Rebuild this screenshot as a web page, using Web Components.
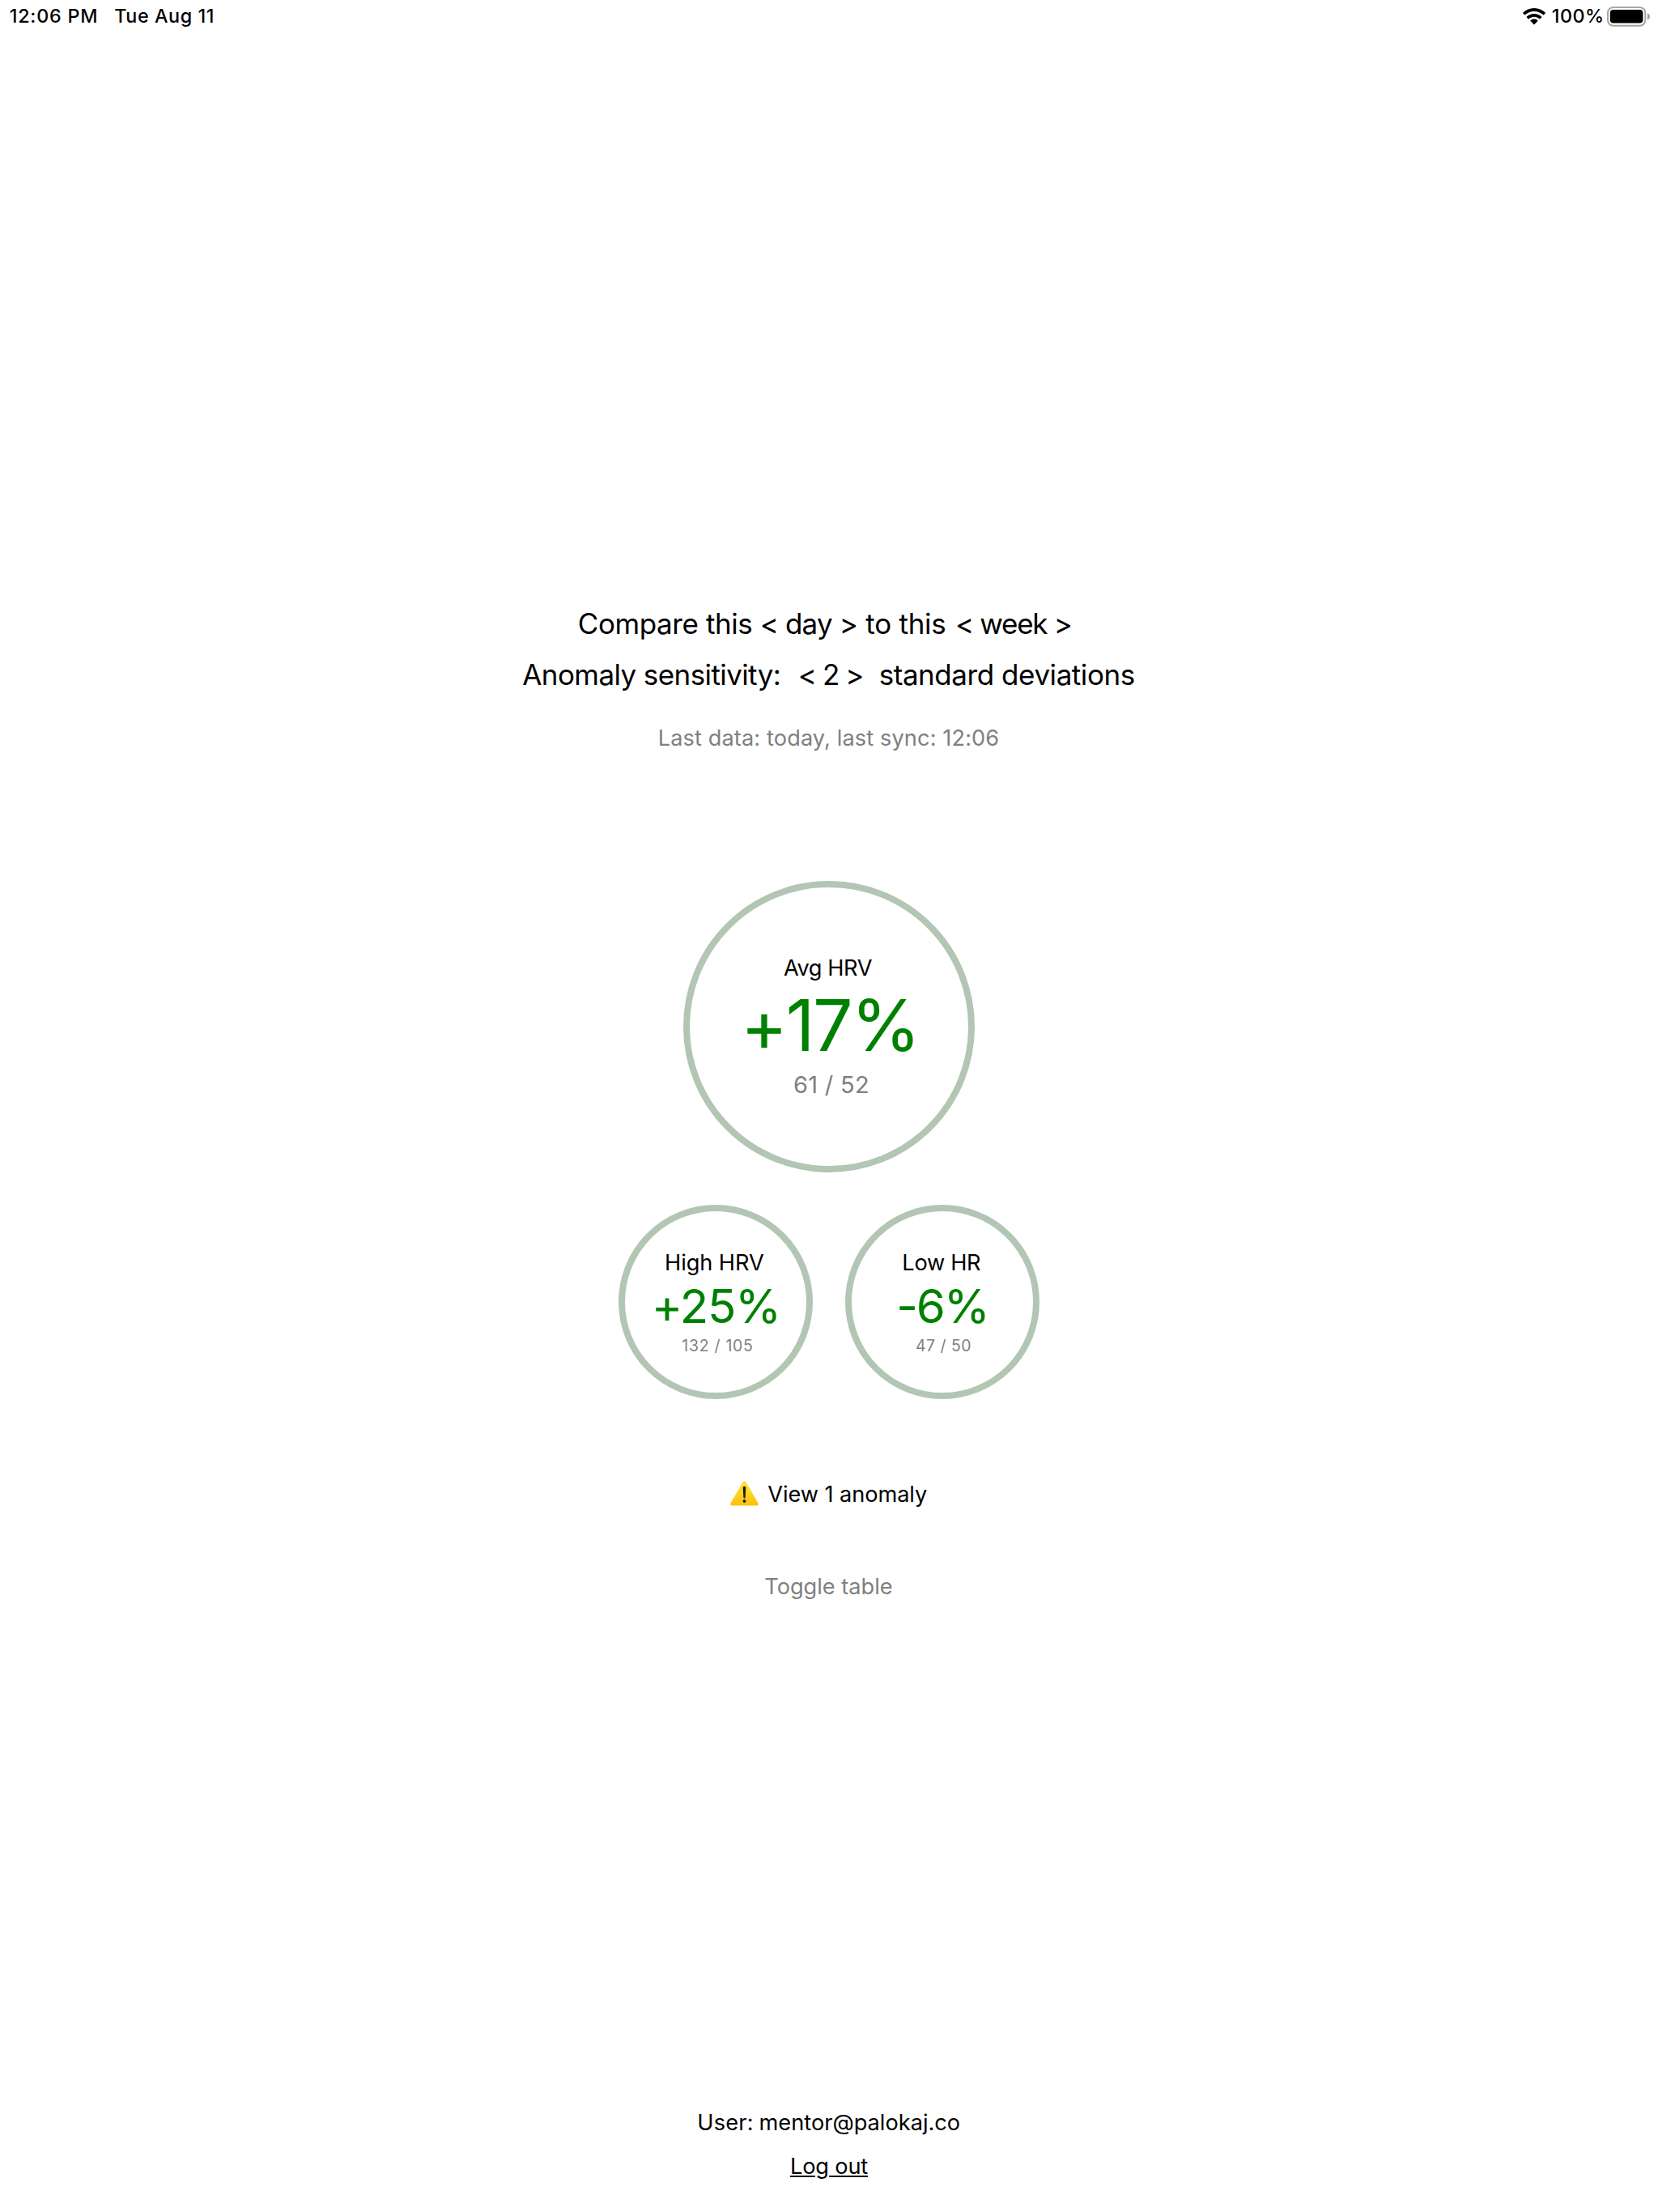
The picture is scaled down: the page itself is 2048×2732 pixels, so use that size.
<!DOCTYPE html>
<html lang="en">
<head>
<meta charset="utf-8">
<title>HRV</title>
<style>
html, body { margin: 0; background: #fff; }
body { font-family: Inter, "Liberation Sans", sans-serif; color: #000; }
</style>
</head>
<body>
<hrv-app></hrv-app>
<script>
// A run of text whose box is its ink: w wide, cap-height tall, tracked to fill the width.
class FitText extends HTMLElement {
  connectedCallback() {
    const size = +this.getAttribute('size');
    const w = +this.getAttribute('w');
    const weight = this.getAttribute('weight') || '380';
    const shift = +(this.getAttribute('shift') || 0);
    const drop = size === 27.2 ? 1 : size === 23.3 ? -1 : 0;
    const text = this.textContent;
    const ctx = document.createElement('canvas').getContext('2d');
    ctx.font = `${weight} ${size}px Inter`;
    const m = ctx.measureText(text);
    const ink = m.actualBoundingBoxLeft + m.actualBoundingBoxRight;
    const ls = text.length > 1 ? (w - ink) / (text.length - 1) : 0;
    const h = Math.round(size * 0.727);
    this.attachShadow({ mode: 'open' }).innerHTML = `
      <style>
        :host { display: block; flex: none; width: ${w}px; height: ${h}px;
          ${shift > 0 ? `margin-left:${2 * shift}px;` : shift < 0 ? `margin-right:${-2 * shift}px;` : ''} }
        span { display: block; width: max-content; white-space: pre; line-height: ${h + 2 * drop}px;
          font-size: ${size}px; font-weight: ${weight}; letter-spacing: ${ls.toFixed(4)}px;
          margin-left: ${m.actualBoundingBoxLeft.toFixed(3)}px; }
        :host([underline]) span { text-decoration: underline; text-decoration-thickness: 2px; text-underline-offset: 2px; }
      </style><span><slot></slot></span>`;
  }
}
customElements.define('fit-text', FitText);

class StatusBar extends HTMLElement {
  constructor() {
    super();
    this.attachShadow({ mode: 'open' }).innerHTML = `
      <style>
        :host { display: flex; box-sizing: border-box; height: 40px; padding: 0 9.5px 0 12.7px; align-items: center; }
        .gap { flex: 1; }
        .date { margin-left: 23px; }
        .pct { margin: 0 5.5px 0 9px; }
        svg { display: block; flex: none; }
      </style>
      <fit-text size="23.3" w="106.6" weight="470">12:06 PM</fit-text>
      <fit-text class="date" size="23.3" w="120.4" weight="470">Tue Aug 11</fit-text>
      <div class="gap"></div>
      <svg width="28" height="21" viewBox="0 0 28 21">
        <path d="M14 0C8.6 0 3.800 2.100.3 5.500c-.3.3-.3.7 0 1l1.700 1.700c.3.3.7.3 1 0C5.900 5.500 9.800 3.900 14 3.900s8.100 1.600 11 4.300c.3.3.7.3 1 0l1.700-1.700c.3-.3.3-.7 0-1C24.200 2.100 19.400 0 14 0z"/>
        <path d="M14 6.900c-3.500 0-6.700 1.400-9.100 3.600-.3.3-.3.7 0 1l1.700 1.700c.3.3.7.3 1 0 1.700-1.600 3.900-2.500 6.400-2.500s4.700.9 6.400 2.500c.3.3.7.3 1 0l1.700-1.700c.3-.3.3-.7 0-1-2.400-2.200-5.600-3.600-9.100-3.600z"/>
        <path d="M14 13.500c-1.700 0-3.200.6-4.400 1.600-.3.3-.3.700 0 1l3.900 3.900c.3.3.7.3 1 0l3.900-3.900c.3-.3.3-.7 0-1-1.200-1-2.700-1.600-4.400-1.600z"/>
      </svg>
      <fit-text class="pct" size="23.3" w="61.3" weight="470">100%</fit-text>
      <svg width="54" height="25" viewBox="0 0 54 25">
        <rect x="1" y="1.100" width="46.300" height="22.600" rx="6.600" fill="none" stroke="#a3a3a3" stroke-width="1.900"/>
        <rect x="3.800" y="4" width="40.600" height="16.600" rx="4"/>
        <path d="M49.800 8.300c1.900.7 3.200 2.200 3.200 4.100s-1.300 3.400-3.200 4.100z" fill="#a3a3a3"/>
      </svg>`;
  }
}
customElements.define('status-bar', StatusBar);

class MetricRing extends HTMLElement {
  constructor() {
    super();
    this.attachShadow({ mode: 'open' }).innerHTML = `
      <style>
        :host { display: flex; flex-direction: column; align-items: center; flex: none; box-sizing: border-box;
          width: var(--d); height: var(--d); padding-top: var(--top); border: 8px solid #b2c6b3; border-radius: 50%; }
        ::slotted([slot=value]) { color: #008000; margin-top: var(--g1); }
        ::slotted([slot=detail]) { color: #808080; margin-top: var(--g2); }
      </style>
      <slot name="label"></slot><slot name="value"></slot><slot name="detail"></slot>`;
  }
}
customElements.define('metric-ring', MetricRing);

class WarningIcon extends HTMLElement {
  constructor() {
    super();
    this.attachShadow({ mode: 'open' }).innerHTML = `
      <style>:host { display: block; width: 35px; height: 31px; flex: none; } svg { display: block; }</style>
      <svg width="35" height="31" viewBox="0 0 35 31">
        <defs><linearGradient id="g" x1="0" y1="0" x2="0" y2="1"><stop offset="0" stop-color="#ffdf43"/><stop offset=".55" stop-color="#ffd21f"/><stop offset="1" stop-color="#fdbf0b"/></linearGradient></defs>
        <path d="M15.600 1.300c.8-1.400 3-1.400 3.800 0l15.200 26.500c.7 1.300 0 2.700-1.500 2.700H1.900c-1.500 0-2.200-1.400-1.500-2.700z" fill="url(#g)"/>
        <path d="M15.700 8.600c0-1.200.7-1.900 1.800-1.900s1.800.7 1.800 1.900l-.7 11.700c0 .8-.4 1.200-1.100 1.200s-1.100-.4-1.100-1.200z" fill="#201c08"/>
        <circle cx="17.500" cy="25" r="1.900" fill="#201c08"/>
      </svg>`;
  }
}
customElements.define('warning-icon', WarningIcon);

class HrvApp extends HTMLElement {
  constructor() {
    super();
    this.attachShadow({ mode: 'open' }).innerHTML = `
      <style>
        :host { display: flex; flex-direction: column; width: 2048px; height: 2732px; background: #fff; overflow: hidden; }
        main, footer { display: flex; flex-direction: column; align-items: center; }
        main { flex: 1; padding-top: 718px; }
        .row { display: flex; justify-content: center; }
        .compare { margin-right: 9.600px; }
        .sense { margin: 38px 2px 0 0; }
        .muted { color: #808080; }
        .sync { margin-top: 55px; }
        .big { --d: 360px; --top: 89px; --g1: 29px; --g2: 31px; margin-top: 167px; }
        .pair { gap: 40px; margin-top: 40px; }
        .small { --d: 240px; --top: 53px; --g1: 23px; --g2: 21px; }
        .alert { align-items: center; gap: 11.300px; margin: 101px 1px 0 0; }
        .toggle { margin-top: 89px; }
        footer { padding-bottom: 47px; gap: 34px; }
        .user { gap: 10.700px; }
      </style>
      <status-bar></status-bar>
      <main>
        <div class="row compare">
          <fit-text size="35" w="212.6">Compare this</fit-text>
          <fit-text size="35" w="117" style="margin-left:12.4px">&lt; day &gt;</fit-text>
          <fit-text size="35" w="98" style="margin-left:11.6px">to this</fit-text>
          <fit-text size="35" w="140.7" style="margin-left:14.7px">&lt; week &gt;</fit-text>
        </div>
        <div class="row sense">
          <fit-text size="35" w="317.4">Anomaly sensitivity:</fit-text>
          <fit-text size="35" w="77.6" style="margin-left:25px">&lt; 2 &gt;</fit-text>
          <fit-text size="35" w="314" style="margin-left:21.4px">standard deviations</fit-text>
        </div>
        <fit-text class="muted sync" size="27.2" w="418.7">Last data: today, last sync: 12:06</fit-text>
        <metric-ring class="big">
          <fit-text slot="label" size="27.2" w="109.7" shift="-1.2">Avg HRV</fit-text>
          <fit-text slot="value" size="87.6" w="205.3" shift="1.7">+17%</fit-text>
          <fit-text slot="detail" size="29" w="91" shift="2.5">61 / 52</fit-text>
        </metric-ring>
        <div class="row pair">
          <metric-ring class="small">
            <fit-text slot="label" size="27.2" w="121" shift="-0.5">High HRV</fit-text>
            <fit-text slot="value" size="58.2" w="149.3" shift="0.3">+25%</fit-text>
            <fit-text slot="detail" size="19.4" w="86.7" shift="1.7">132 / 105</fit-text>
          </metric-ring>
          <metric-ring class="small">
            <fit-text slot="label" size="27.2" w="94.7" shift="-0.3">Low HR</fit-text>
            <fit-text slot="value" size="58.2" w="105.4">-6%</fit-text>
            <fit-text slot="detail" size="19.4" w="67.3" shift="1.7">47 / 50</fit-text>
          </metric-ring>
        </div>
        <div class="row alert">
          <warning-icon></warning-icon>
          <fit-text size="27.2" w="196.7">View 1 anomaly</fit-text>
        </div>
        <fit-text class="muted toggle" size="27.2" w="156.4" shift="-0.5">Toggle table</fit-text>
      </main>
      <footer>
        <div class="row user">
          <fit-text size="27.2" w="65.7">User:</fit-text>
          <fit-text size="27.2" w="245.3">mentor@palokaj.co</fit-text>
        </div>
        <fit-text underline size="27.2" w="94.3" shift="1.2">Log out</fit-text>
      </footer>`;
  }
}
customElements.define('hrv-app', HrvApp);
</script>
</body>
</html>
